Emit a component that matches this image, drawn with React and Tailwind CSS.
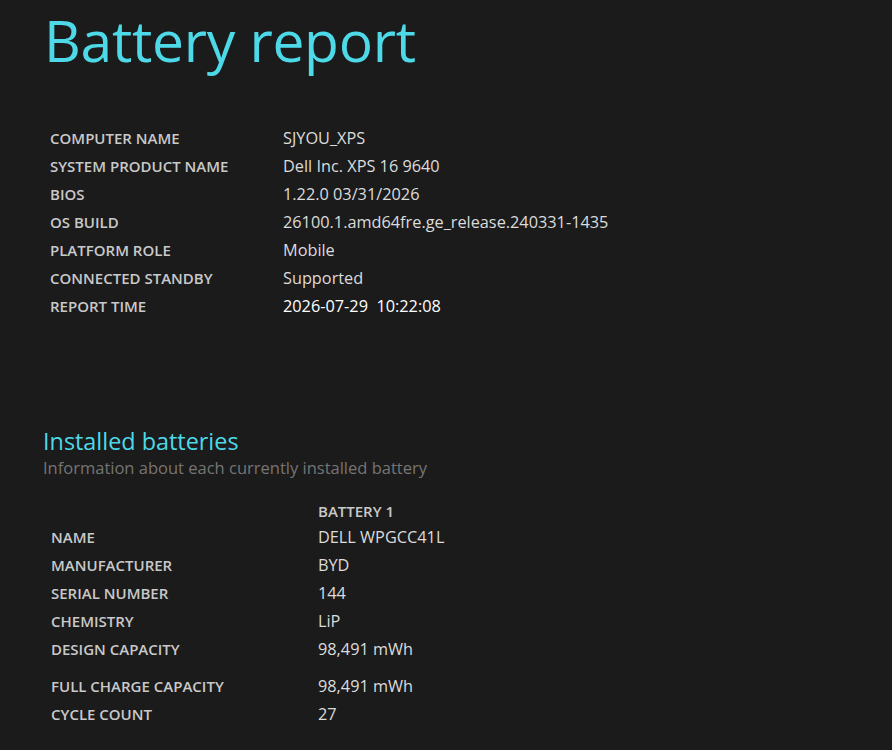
import React from 'react';

const sysInfo = [
  ['COMPUTER NAME', 'SJYOU_XPS'],
  ['SYSTEM PRODUCT NAME', 'Dell Inc. XPS 16 9640'],
  ['BIOS', '1.22.0 03/31/2026'],
  ['OS BUILD', '26100.1.amd64fre.ge_release.240331-1435'],
  ['PLATFORM ROLE', 'Mobile'],
  ['CONNECTED STANDBY', 'Supported'],
  ['REPORT TIME', '2026-07-29  10:22:08'],
];

const batteryA = [
  ['NAME', 'DELL WPGCC41L'],
  ['MANUFACTURER', 'BYD'],
  ['SERIAL NUMBER', '144'],
  ['CHEMISTRY', 'LiP'],
  ['DESIGN CAPACITY', '98,491 mWh'],
];

const batteryB = [
  ['FULL CHARGE CAPACITY', '98,491 mWh'],
  ['CYCLE COUNT', '27'],
];

const Row = ({ label, value, labelW, bright }) => (
  <div className='flex items-center h-[28px]'>
    <div className={`${labelW} shrink-0 text-[15px] font-semibold text-[#c9c9c9]`}>{label}</div>
    <div className={`text-[16.3px] whitespace-pre ${bright ? 'text-white' : 'text-[#dcdcdc]'}`}>{value}</div>
  </div>
);

const App = () => {
  return (
    <div className='w-[892px] h-[750px] overflow-hidden bg-[#1b1b1b] font-["Open_Sans",sans-serif]'>
      <h1 className='pl-[44px] text-[57px] leading-[80px] text-[#4dd9e8] tracking-[-0.3px]'>Battery report</h1>

      <div className='pl-[50px] mt-[44px]'>
        {sysInfo.map(([l, v], i) => (
          <Row key={l} label={l} value={v} labelW='w-[233px]' bright={i === sysInfo.length - 1} />
        ))}
      </div>

      <div className='pl-[43px] mt-[106px]'>
        <h2 className='text-[23.4px] leading-[30px] text-[#4dd9e8]'>Installed batteries</h2>
        <p className='text-[16.5px] leading-[24px] text-[#757575]'>Information about each currently installed battery</p>
      </div>

      <div className='pl-[51px] mt-[19px]'>
        <div className='flex h-[24px] items-center'>
          <div className='w-[267px]' />
          <div className='text-[15px] font-semibold text-[#c9c9c9]'>BATTERY 1</div>
        </div>
        {batteryA.map(([l, v]) => (
          <Row key={l} label={l} value={v} labelW='w-[267px]' />
        ))}
        <div className='mt-[9px]'>
          {batteryB.map(([l, v]) => (
            <Row key={l} label={l} value={v} labelW='w-[267px]' />
          ))}
        </div>
      </div>
    </div>
  );
};

export default App;
